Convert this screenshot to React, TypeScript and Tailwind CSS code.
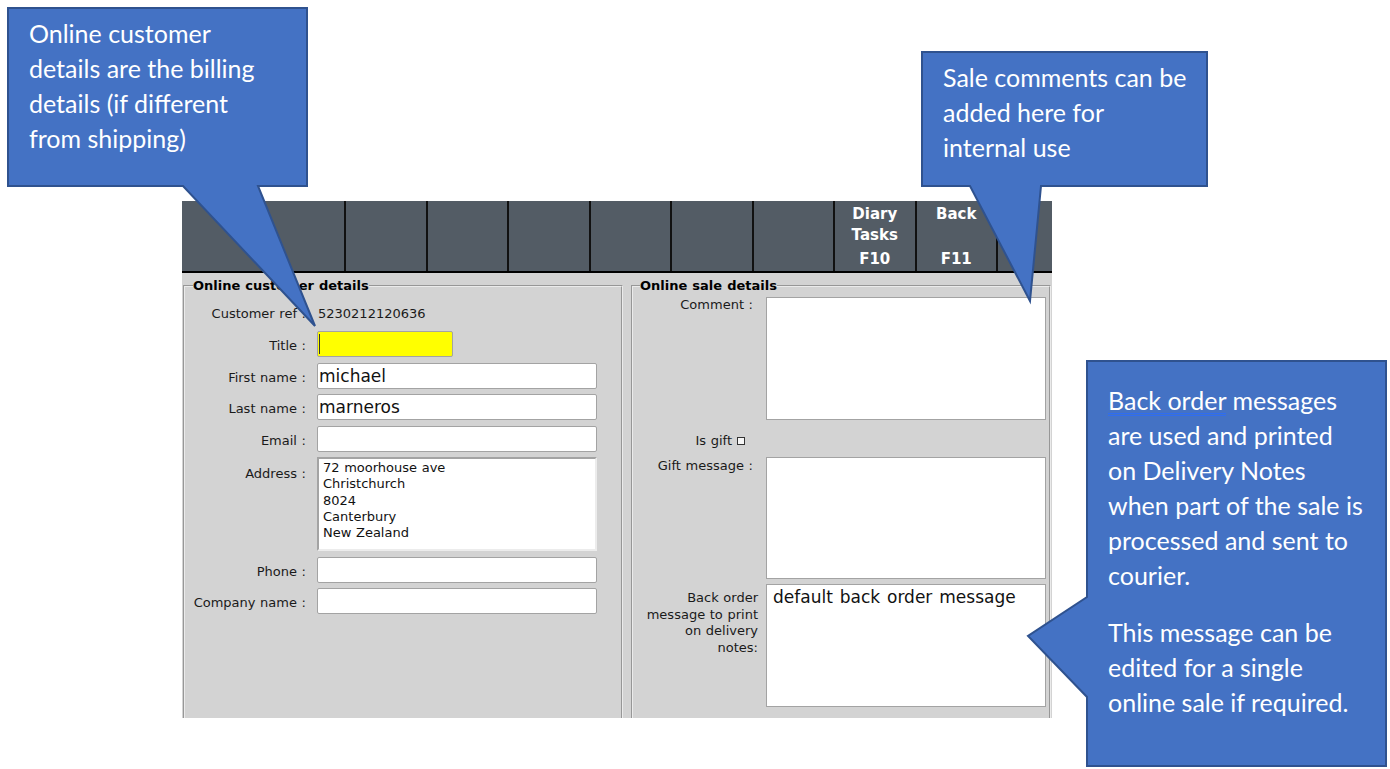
const ui = { fontFamily: '"DejaVu Sans", Verdana, sans-serif' };
const note = { fontFamily: 'Lato, "Noto Sans", sans-serif' };

const toolbarCells = ["", "", "", "", "", "", "diary", "back"];

function Toolbar() {
  return (
    <div className="flex h-[72px] border-b-2 border-black bg-[#535c65] text-[15px] font-bold leading-[21px] text-white">
      <div className="w-[162px] shrink-0" />
      {toolbarCells.map((cell, i) => (
        <div key={i} className="flex w-[81.5px] shrink-0 flex-col justify-between border-l-2 border-[#111] pt-[3px] text-center">
          {cell === "diary" && (
            <>
              <div>
                Diary
                <br />
                Tasks
              </div>
              <div className="leading-[23px]">F10</div>
            </>
          )}
          {cell === "back" && (
            <>
              <div>Back</div>
              <div className="leading-[23px]">F11</div>
            </>
          )}
        </div>
      ))}
      <div className="flex-1 border-l-2 border-[#111]" />
    </div>
  );
}

function TextBox({ value, width = "w-[280px]", yellow = false }: { value?: string; width?: string; yellow?: boolean }) {
  return (
    <div
      className={`flex h-[26px] ${width} items-center rounded-[2px] border border-[#a3a3a3] pl-[1px] text-[17px] text-[#111] ${
        yellow ? "bg-[#ffff00]" : "bg-white"
      }`}
    >
      {yellow ? <span className="h-[20px] w-[1px] bg-[#333]" /> : value}
    </div>
  );
}

function LeftRow({ label, children }: { label: string; children: React.ReactNode }) {
  return (
    <div className="flex">
      <div className="w-[113px] shrink-0 whitespace-nowrap pt-[7px] text-right">{label}</div>
      <div className="ml-[11px]">{children}</div>
    </div>
  );
}

function CustomerDetails() {
  return (
    <fieldset className="h-[600px] w-[440px] shrink-0 border-2 border-[#ebebeb] pl-[8px] pt-[12px] [border-style:groove]">
      <legend className="text-[13px] font-bold leading-[17px] text-black">Online customer details</legend>
      <div className="mb-[9px] flex items-center leading-[16px]">
        <div className="w-[113px] shrink-0 whitespace-nowrap text-right">Customer ref :</div>
        <div className="ml-[12px]">5230212120636</div>
      </div>
      <div className="flex flex-col gap-[5.5px] leading-[16px]">
        <LeftRow label="Title :">
          <TextBox width="w-[136px]" yellow />
        </LeftRow>
        <LeftRow label="First name :">
          <TextBox value="michael" />
        </LeftRow>
        <LeftRow label="Last name :">
          <TextBox value="marneros" />
        </LeftRow>
        <LeftRow label="Email :">
          <TextBox />
        </LeftRow>
        <div className="flex">
          <div className="w-[113px] shrink-0 pt-[9px] text-right">Address :</div>
          <div className="ml-[11px] h-[94px] w-[280px] border-2 border-b-[#ececec] border-l-[#a3a3a3] border-r-[#ececec] border-t-[#a3a3a3] bg-white pl-[4px] pt-[1px] leading-[16.25px] text-[#111]">
            72 moorhouse ave
            <br />
            Christchurch
            <br />
            8024
            <br />
            Canterbury
            <br />
            New Zealand
          </div>
        </div>
        <LeftRow label="Phone :">
          <TextBox />
        </LeftRow>
        <LeftRow label="Company name :">
          <TextBox />
        </LeftRow>
      </div>
    </fieldset>
  );
}

function SaleDetails() {
  return (
    <fieldset className="h-[600px] w-[420px] shrink-0 border-2 border-[#ebebeb] pl-[7px] pt-[3px] leading-[16px] [border-style:groove]">
      <legend className="text-[13px] font-bold leading-[17px] text-black">Online sale details</legend>
      <div className="flex">
        <div className="w-[118px] shrink-0 pr-[5px] text-right">Comment :</div>
        <div className="ml-[8px] h-[123px] w-[280px] border border-[#a3a3a3] bg-white" />
      </div>
      <div className="flex h-[37px]">
        <div className="flex w-[118px] shrink-0 items-start justify-end pr-[13px] pt-[13px]">
          Is gift
          <span className="ml-[5px] mt-[4px] h-[8px] w-[8px] border border-[#333] bg-[#f6f6f6]" />
        </div>
      </div>
      <div className="flex">
        <div className="w-[118px] shrink-0 pr-[5px] pt-[1px] text-right">Gift message :</div>
        <div className="ml-[8px] h-[122px] w-[280px] border border-[#a3a3a3] bg-white" />
      </div>
      <div className="mt-[5px] flex">
        <div className="w-[118px] shrink-0 pt-[6px] text-right leading-[16.5px]">
          Back order
          <br />
          message to print
          <br />
          on delivery
          <br />
          notes:
        </div>
        <div className="ml-[8px] h-[123px] w-[280px] border border-[#a3a3a3] bg-white pl-[6px] pt-[2px] text-[17px] leading-[20px] text-[#111] [word-spacing:1.5px]">
          default back order message
        </div>
      </div>
    </fieldset>
  );
}

function Callouts() {
  return (
    <svg className="pointer-events-none absolute left-0 top-0" width="1390" height="769" viewBox="0 0 1390 769">
      <g fill="#4472c4" stroke="#2f528f" strokeWidth="2" strokeLinejoin="miter">
        <polygon points="8,8 307,8 307,186 258,186 315,326 183,186 8,186" />
        <polygon points="922,52 1207,52 1207,186 1041,186 1030,301 970,186 922,186" />
        <polygon points="1087,361 1386,361 1386,766 1087,766 1087,697 1028,636 1087,597" />
      </g>
    </svg>
  );
}

export default function App() {
  return (
    <div className="relative h-[769px] w-[1390px] overflow-hidden bg-white pl-[182px] pt-[201px]">
      <div className="h-[517px] w-[870px] overflow-hidden bg-[#d3d3d3] text-[13px] text-[#1a1a1a] [word-spacing:0.5px]" style={ui}>
        <Toolbar />
        <div className="flex gap-[8px] pl-[1px] pt-[4px]">
          <CustomerDetails />
          <SaleDetails />
        </div>
      </div>

      <Callouts />

      <div className="absolute left-[29px] top-[16px] whitespace-nowrap text-[25px] leading-[35px] text-white" style={note}>
        Online customer
        <br />
        details are the billing
        <br />
        details (if different
        <br />
        from shipping)
      </div>

      <div className="absolute left-[943px] top-[60px] whitespace-nowrap text-[25px] leading-[35px] text-white" style={note}>
        Sale comments can be
        <br />
        added here for
        <br />
        internal use
      </div>

      <div className="absolute left-[1108px] top-[383px] whitespace-nowrap text-[25px] leading-[35px] text-white" style={note}>
        <p>
          <span className="underline decoration-[#2f6df0] decoration-double decoration-1 underline-offset-[3px]">Back order</span> messages
          <br />
          are used and printed
          <br />
          on Delivery Notes
          <br />
          when part of the sale is
          <br />
          processed and sent to
          <br />
          courier.
        </p>
        <p className="mt-[22px]">
          This message can be
          <br />
          edited for a single
          <br />
          online sale if required.
        </p>
      </div>
    </div>
  );
}
